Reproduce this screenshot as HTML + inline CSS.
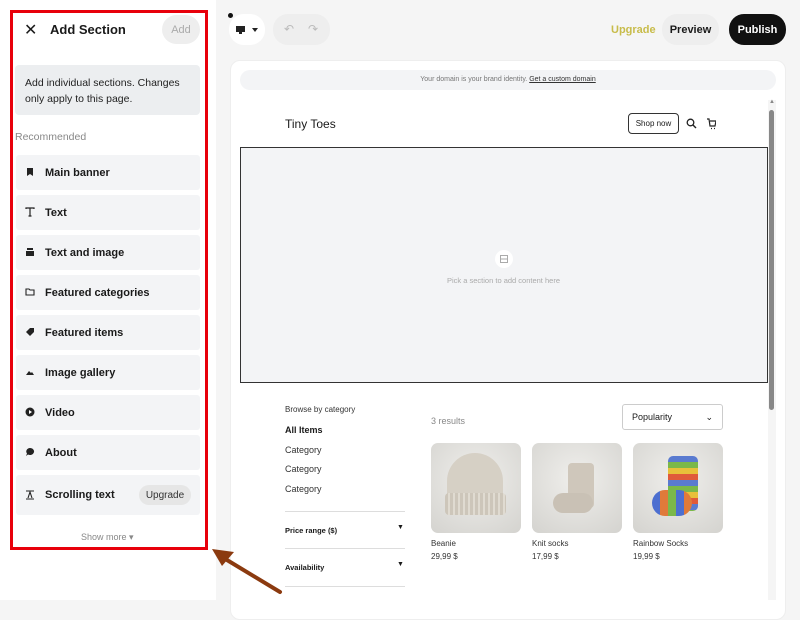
<!DOCTYPE html>
<html><head><meta charset="utf-8"><style>
*{box-sizing:border-box;margin:0;padding:0}
body{width:800px;height:600px;overflow:hidden;background:#f5f5f5;font-family:"Liberation Sans",sans-serif;color:#1a1a1a;position:relative}
.abs{position:absolute}
#panel{left:0;top:0;width:216px;height:600px;background:#fff}
#frame{left:10px;top:10px;width:198px;height:540px;border:3px solid #e8000b}
.row{position:absolute;left:16px;width:184px;height:35px;background:#f3f4f6;border-radius:3px;font-size:11px;font-weight:bold;display:flex;align-items:center;padding-left:29px}
.ic{position:absolute;left:9px;top:12px;width:10px;height:10px}
.btn{display:flex;align-items:center;justify-content:center}
</style></head><body>
<div id="panel" class="abs">
 <div class="abs" style="left:24px;top:20px;font-size:16px">✕</div>
 <div class="abs" style="left:50px;top:22px;font-size:13px;font-weight:bold">Add Section</div>
 <div class="abs btn" style="left:162px;top:15px;width:38px;height:29px;border-radius:15px;background:#eee;color:#aaa;font-size:11px">Add</div>
 <div class="abs" style="left:15px;top:65px;width:185px;height:50px;background:#eceef0;border-radius:4px;padding:10px 10px;font-size:10.5px;line-height:16px;color:#222">Add individual sections. Changes only apply to this page.</div>
 <div class="abs" style="left:15px;top:131px;font-size:10.5px;color:#888">Recommended</div>
 <div class="row" style="top:155px"><svg class="ic" viewBox="0 0 10 10"><path d="M2 1h6v8L5 7 2 9z" fill="#222"/></svg>Main banner</div>
 <div class="row" style="top:195px"><svg class="ic" viewBox="0 0 10 10"><path d="M1 2V1h8v1M5 1v8M3.5 9h3" stroke="#222" fill="none" stroke-width="1.2"/></svg>Text</div>
 <div class="row" style="top:235px"><svg class="ic" viewBox="0 0 10 10"><rect x="1" y="4" width="8" height="5" fill="#222"/><rect x="2" y="1" width="6" height="2" fill="#222"/></svg>Text and image</div>
 <div class="row" style="top:275px"><svg class="ic" viewBox="0 0 10 10"><path d="M1 2h3l1 1h4v5H1z" stroke="#222" fill="none" stroke-width="1.1"/></svg>Featured categories</div>
 <div class="row" style="top:315px"><svg class="ic" viewBox="0 0 10 10"><path d="M5 1h4v4L5 9 1 5z" fill="#222"/></svg>Featured items</div>
 <div class="row" style="top:355px"><svg class="ic" viewBox="0 0 10 10"><path d="M1 8l3-4 2 2 1-1 2 3z" fill="#222"/></svg>Image gallery</div>
 <div class="row" style="top:395px"><svg class="ic" viewBox="0 0 10 10"><circle cx="5" cy="5" r="4.5" fill="#222"/><path d="M4 3l3 2-3 2z" fill="#fff"/></svg>Video</div>
 <div class="row" style="top:435px"><svg class="ic" viewBox="0 0 10 10"><path d="M5 1a4 3.5 0 1 1-2 6.5L1 9l1-2.5A4 3.5 0 0 1 5 1z" fill="#222"/></svg>About</div>
 <div class="row" style="top:475px;height:40px"><svg class="ic" style="top:15px" viewBox="0 0 10 10"><path d="M1 1h8M1 9h8M3 8l2-6 2 6" stroke="#222" fill="none" stroke-width="1.1"/></svg>Scrolling text
  <div class="abs btn" style="left:123px;top:10px;width:52px;height:20px;border-radius:10px;background:#e6e6e6;font-size:10px;font-weight:normal;color:#333">Upgrade</div></div>
 <div class="abs" style="left:81px;top:532px;font-size:9px;color:#888">Show more ▾</div>
</div>
<div id="frame" class="abs"></div>
<div class="abs" style="left:229px;top:14px;width:36px;height:31px;background:#fff;border-radius:15px"></div>
<div class="abs" style="left:228px;top:13px;width:5px;height:5px;border-radius:50%;background:#111"></div>
<svg class="abs" style="left:236px;top:25px" width="24" height="10" viewBox="0 0 24 10"><rect x="0" y="1" width="9" height="6" fill="#222"/><rect x="3" y="7" width="3" height="2" fill="#222"/><path d="M16 3h6l-3 4z" fill="#222"/></svg>
<div class="abs" style="left:273px;top:14px;width:57px;height:31px;background:#eee;border-radius:15px;color:#bbb;font-size:12px;line-height:31px;padding-left:11px;letter-spacing:14px">↶↷</div>
<div class="abs" style="left:611px;top:24px;font-size:11px;color:#c8bc4a;font-weight:bold">Upgrade</div>
<div class="abs btn" style="left:662px;top:14px;width:57px;height:31px;background:#eee;border-radius:15px;font-size:11px;font-weight:bold">Preview</div>
<div class="abs btn" style="left:729px;top:14px;width:57px;height:31px;background:#111;color:#fff;border-radius:15px;font-size:11px;font-weight:bold">Publish</div>
<div class="abs" style="left:230px;top:60px;width:556px;height:560px;background:#fff;border-radius:10px;border:1px solid #eee"></div>
<div class="abs" style="left:240px;top:70px;width:536px;height:20px;background:#f3f4f6;border-radius:10px;font-size:7px;color:#777;text-align:center;line-height:20px">Your domain is your brand identity. <u style="color:#333">Get a custom domain</u></div>
<div class="abs" style="left:768px;top:100px;width:8px;height:500px;background:#f5f5f5"></div>
<div class="abs" style="left:769px;top:110px;width:5px;height:300px;background:#888;border-radius:3px"></div>
<div class="abs" style="left:769px;top:99px;font-size:6px;color:#888">▲</div>
<div class="abs" style="left:285px;top:117px;font-size:12px">Tiny Toes</div>
<div class="abs btn" style="left:628px;top:113px;width:51px;height:21px;border:1.3px solid #333;border-radius:4px;font-size:8px">Shop now</div>
<svg class="abs" style="left:686px;top:118px" width="30" height="12" viewBox="0 0 30 12"><circle cx="4.5" cy="4.5" r="3.3" fill="none" stroke="#222" stroke-width="1.3"/><path d="M7 7l3 3" stroke="#222" stroke-width="1.4"/><path d="M21 1h2l1 7h5l1-5h-6M25 10.5h1M28 10.5h1" stroke="#222" fill="none" stroke-width="1.2"/></svg>
<div class="abs" style="left:240px;top:147px;width:528px;height:236px;background:#f3f4f6;border:1.5px solid #333"></div>
<div class="abs" style="left:495px;top:250px;width:18px;height:18px;border-radius:50%;background:#fff"></div>
<svg class="abs" style="left:500px;top:255px" width="8" height="8" viewBox="0 0 8 8"><rect x="0.5" y="0.5" width="7" height="7" fill="none" stroke="#aaa"/><path d="M1 4h6" stroke="#aaa"/></svg>
<div class="abs" style="left:447px;top:276px;font-size:7.5px;color:#aaa">Pick a section to add content here</div>
<div class="abs" style="left:285px;top:405px;font-size:8px;color:#333">Browse by category</div>
<div class="abs" style="left:285px;top:425px;font-size:9px;font-weight:bold">All Items</div>
<div class="abs" style="left:285px;top:445px;font-size:9px;color:#333">Category</div>
<div class="abs" style="left:285px;top:464px;font-size:9px;color:#333">Category</div>
<div class="abs" style="left:285px;top:484px;font-size:9px;color:#333">Category</div>
<div class="abs" style="left:285px;top:511px;width:120px;border-top:1px solid #ddd"></div>
<div class="abs" style="left:285px;top:526px;font-size:7.5px;font-weight:bold">Price range ($)</div>
<div class="abs" style="left:397px;top:524px;font-size:7px">▼</div>
<div class="abs" style="left:285px;top:548px;width:120px;border-top:1px solid #ddd"></div>
<div class="abs" style="left:285px;top:563px;font-size:7.5px;font-weight:bold">Availability</div>
<div class="abs" style="left:397px;top:561px;font-size:7px">▼</div>
<div class="abs" style="left:285px;top:586px;width:120px;border-top:1px solid #ddd"></div>
<div class="abs" style="left:431px;top:416px;font-size:9px;color:#888">3 results</div>
<div class="abs" style="left:622px;top:404px;width:101px;height:26px;border:1px solid #ccc;border-radius:3px;font-size:9px;line-height:24px;padding-left:9px">Popularity<span style="position:absolute;right:9px;font-size:9px">⌄</span></div>
<div class="abs" style="left:431px;top:443px;width:90px;height:90px;border-radius:7px;background:radial-gradient(circle at 50% 40%,#f0efec,#d4d3cf)"></div>
<div class="abs" style="left:447px;top:453px;width:56px;height:48px;border-radius:28px 28px 4px 4px;background:#d6d0c5"></div>
<div class="abs" style="left:445px;top:493px;width:61px;height:22px;border-radius:4px;background:repeating-linear-gradient(90deg,#cdc6ba 0 3px,#e0dbd1 3px 5px)"></div>
<div class="abs" style="left:532px;top:443px;width:90px;height:90px;border-radius:7px;background:radial-gradient(circle at 50% 40%,#f0efec,#d4d3cf)"></div>
<div class="abs" style="left:568px;top:463px;width:26px;height:45px;border-radius:4px;background:#cfc7bb"></div>
<div class="abs" style="left:553px;top:493px;width:40px;height:20px;border-radius:10px;background:#c9c1b5"></div>
<div class="abs" style="left:633px;top:443px;width:90px;height:90px;border-radius:7px;background:radial-gradient(circle at 50% 40%,#f0efec,#d4d3cf)"></div>
<div class="abs" style="left:668px;top:456px;width:30px;height:55px;border-radius:5px;background:repeating-linear-gradient(180deg,#5a7bd0 0 6px,#7bb84a 6px 12px,#e8c03a 12px 18px,#e05a3a 18px 24px)"></div>
<div class="abs" style="left:652px;top:490px;width:40px;height:26px;border-radius:13px;background:repeating-linear-gradient(90deg,#4d6fd0 0 8px,#e07a3a 8px 16px,#7bb84a 16px 24px)"></div>
<div class="abs" style="left:431px;top:539px;font-size:8px;color:#333">Beanie</div>
<div class="abs" style="left:431px;top:552px;font-size:8px;color:#333">29,99 $</div>
<div class="abs" style="left:532px;top:539px;font-size:8px;color:#333">Knit socks</div>
<div class="abs" style="left:532px;top:552px;font-size:8px;color:#333">17,99 $</div>
<div class="abs" style="left:633px;top:539px;font-size:8px;color:#333">Rainbow Socks</div>
<div class="abs" style="left:633px;top:552px;font-size:8px;color:#333">19,99 $</div>
<svg class="abs" style="left:200px;top:535px" width="90" height="65" viewBox="0 0 90 65"><path d="M80 57L22 22" stroke="#8b3a0f" stroke-width="4" stroke-linecap="round"/><path d="M12 14l22 3-12 14z" fill="#8b3a0f"/></svg>
</body></html>
